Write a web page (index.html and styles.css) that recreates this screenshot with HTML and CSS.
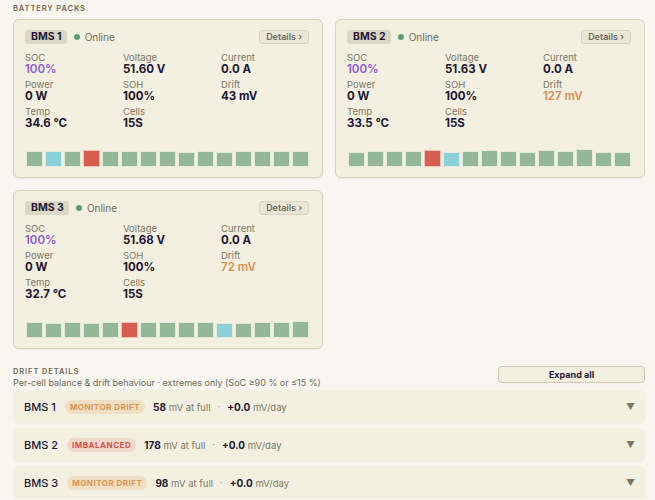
FILE: index.html
```html
<!DOCTYPE html>
<html lang="en">
<head>
  <meta charset="UTF-8" />
  <meta name="viewport" content="width=device-width, initial-scale=1.0" />
  <title>Battery Packs</title>
  <link rel="stylesheet" href="styles.css">
</head>
<body>
  <div class="page">
    <h2 class="section-title">BATTERY PACKS</h2>
    <div class="packs">

      <div class="pack">
        <div class="pack-head">
          <span class="pack-name">BMS 1</span>
          <span class="dot"></span>
          <span class="status">Online</span>
          <button class="details">Details ›</button>
        </div>
        <div class="stats">
          <div><div class="label">SOC</div><div class="value soc">100%</div></div>
          <div><div class="label">Voltage</div><div class="value">51.60 V</div></div>
          <div><div class="label">Current</div><div class="value">0.0 A</div></div>
          <div><div class="label">Power</div><div class="value">0 W</div></div>
          <div><div class="label">SOH</div><div class="value">100%</div></div>
          <div><div class="label">Drift</div><div class="value">43 mV</div></div>
          <div><div class="label">Temp</div><div class="value">34.6 °C</div></div>
          <div><div class="label">Cells</div><div class="value">15S</div></div>
        </div>
        <div class="cells">
          <span class="cell" style="height:16px"></span>
          <span class="cell low" style="height:16px"></span>
          <span class="cell" style="height:16px"></span>
          <span class="cell high" style="height:17px"></span>
          <span class="cell" style="height:16px"></span>
          <span class="cell" style="height:16px"></span>
          <span class="cell" style="height:16px"></span>
          <span class="cell" style="height:16px"></span>
          <span class="cell" style="height:15px"></span>
          <span class="cell" style="height:16px"></span>
          <span class="cell" style="height:15px"></span>
          <span class="cell" style="height:16px"></span>
          <span class="cell" style="height:16px"></span>
          <span class="cell" style="height:16px"></span>
          <span class="cell" style="height:16px"></span>
        </div>
      </div>

      <div class="pack">
        <div class="pack-head">
          <span class="pack-name">BMS 2</span>
          <span class="dot"></span>
          <span class="status">Online</span>
          <button class="details">Details ›</button>
        </div>
        <div class="stats">
          <div><div class="label">SOC</div><div class="value soc">100%</div></div>
          <div><div class="label">Voltage</div><div class="value">51.63 V</div></div>
          <div><div class="label">Current</div><div class="value">0.0 A</div></div>
          <div><div class="label">Power</div><div class="value">0 W</div></div>
          <div><div class="label">SOH</div><div class="value">100%</div></div>
          <div><div class="label">Drift</div><div class="value warn">127 mV</div></div>
          <div><div class="label">Temp</div><div class="value">33.5 °C</div></div>
          <div><div class="label">Cells</div><div class="value">15S</div></div>
        </div>
        <div class="cells">
          <span class="cell" style="height:15px"></span>
          <span class="cell" style="height:16px"></span>
          <span class="cell" style="height:16px"></span>
          <span class="cell" style="height:16px"></span>
          <span class="cell high" style="height:17px"></span>
          <span class="cell low" style="height:15px"></span>
          <span class="cell" style="height:16px"></span>
          <span class="cell" style="height:17px"></span>
          <span class="cell" style="height:16px"></span>
          <span class="cell" style="height:15px"></span>
          <span class="cell" style="height:17px"></span>
          <span class="cell" style="height:16px"></span>
          <span class="cell" style="height:18px"></span>
          <span class="cell" style="height:15px"></span>
          <span class="cell" style="height:15px"></span>
        </div>
      </div>

      <div class="pack">
        <div class="pack-head">
          <span class="pack-name">BMS 3</span>
          <span class="dot"></span>
          <span class="status">Online</span>
          <button class="details">Details ›</button>
        </div>
        <div class="stats">
          <div><div class="label">SOC</div><div class="value soc">100%</div></div>
          <div><div class="label">Voltage</div><div class="value">51.68 V</div></div>
          <div><div class="label">Current</div><div class="value">0.0 A</div></div>
          <div><div class="label">Power</div><div class="value">0 W</div></div>
          <div><div class="label">SOH</div><div class="value">100%</div></div>
          <div><div class="label">Drift</div><div class="value warn">72 mV</div></div>
          <div><div class="label">Temp</div><div class="value">32.7 °C</div></div>
          <div><div class="label">Cells</div><div class="value">15S</div></div>
        </div>
        <div class="cells">
          <span class="cell" style="height:16px"></span>
          <span class="cell" style="height:15px"></span>
          <span class="cell" style="height:16px"></span>
          <span class="cell" style="height:15px"></span>
          <span class="cell" style="height:16px"></span>
          <span class="cell high" style="height:16px"></span>
          <span class="cell" style="height:16px"></span>
          <span class="cell" style="height:16px"></span>
          <span class="cell" style="height:16px"></span>
          <span class="cell" style="height:16px"></span>
          <span class="cell low" style="height:15px"></span>
          <span class="cell" style="height:15px"></span>
          <span class="cell" style="height:16px"></span>
          <span class="cell" style="height:16px"></span>
          <span class="cell" style="height:17px"></span>
        </div>
      </div>

    </div>

    <div class="drift-head">
      <div>
        <h2 class="section-title">DRIFT DETAILS</h2>
        <p class="subtitle">Per-cell balance &amp; drift behaviour · extremes only (SoC ≥90 % or ≤15 %)</p>
      </div>
      <button class="expand">Expand all</button>
    </div>

    <div class="drift-list">
      <div class="drift-row">
        <span class="drift-name">BMS 1</span>
        <span class="tag monitor">MONITOR DRIFT</span>
        <span class="metric"><b>58</b> mV at full</span>
        <span class="sep">·</span>
        <span class="metric"><b>+0.0</b> mV/day</span>
        <span class="caret">▼</span>
      </div>
      <div class="drift-row">
        <span class="drift-name">BMS 2</span>
        <span class="tag imbalanced">IMBALANCED</span>
        <span class="metric"><b>178</b> mV at full</span>
        <span class="sep">·</span>
        <span class="metric"><b>+0.0</b> mV/day</span>
        <span class="caret">▼</span>
      </div>
      <div class="drift-row">
        <span class="drift-name">BMS 3</span>
        <span class="tag monitor">MONITOR DRIFT</span>
        <span class="metric"><b>98</b> mV at full</span>
        <span class="sep">·</span>
        <span class="metric"><b>+0.0</b> mV/day</span>
        <span class="caret">▼</span>
      </div>
    </div>
  </div>
</body>
</html>
```

FILE: styles.css
```css
body {
  margin: 0;
  font-family: Inter, "Noto Sans", sans-serif;
  background-color: #f9f6ef;
  color: #1f1733;
}
.page {
  padding: 3px 10px 0 13px;
}
.section-title {
  margin: 0;
  font-size: 7.5px;
  font-weight: 600;
  letter-spacing: 0.9px;
  color: #6e6756;
  line-height: 11px;
}
.packs {
  display: grid;
  grid-template-columns: 310px 310px;
  gap: 12px 12px;
  margin-top: 5px;
}
.pack {
  background: #f3f0e1;
  border: 1px solid #d8d2bf;
  border-radius: 6px;
  padding: 10px 13px 10px 11px;
  height: 137px;
  box-shadow: 0 1px 2px rgba(0, 0, 0, 0.06);
  display: flex;
  flex-direction: column;
}
.pack-head {
  display: flex;
  align-items: center;
  height: 14px;
}
.pack-name {
  background: #dcd6c4;
  border-radius: 3px;
  padding: 0 5px 0 6px;
  font-size: 10.5px;
  font-weight: 700;
  line-height: 14px;
}
.dot {
  width: 6px;
  height: 6px;
  border-radius: 50%;
  background: #5c9e73;
  margin-left: 7px;
}
.status {
  margin-left: 5px;
  font-size: 10px;
  color: #6e6a5d;
}
.details {
  margin-left: auto;
  font-family: inherit;
  font-size: 9px;
  font-weight: 600;
  color: #6e6a5d;
  background: #ebe7d7;
  border: 1px solid #d9d4c2;
  border-radius: 3px;
  height: 14px;
  padding: 0 6px;
  line-height: 12px;
}
.stats {
  display: grid;
  grid-template-columns: 98px 98px 1fr;
  row-gap: 3px;
  margin-top: 8px;
}
.label {
  font-size: 9.5px;
  color: #7b7566;
  line-height: 11px;
}
.value {
  font-size: 11.5px;
  font-weight: 700;
  line-height: 13px;
}
.soc {
  color: #8a5ad8;
  font-weight: 600;
}
.warn {
  color: #dc8d4e;
  font-weight: 600;
}
.cells {
  margin-top: auto;
  display: flex;
  align-items: flex-end;
  gap: 2px;
  padding-left: 1px;
}
.cell {
  flex: 1;
  background: #94b797;
  border: 1px solid #e6eadb;
  box-sizing: border-box;
  border-radius: 1px;
}
.cell.low {
  background: #8bcfd9;
}
.cell.high {
  background: #d65e4e;
  border-color: #f1c3b6;
}
.drift-head {
  display: flex;
  justify-content: space-between;
  align-items: flex-start;
  margin-top: 17px;
}
.subtitle {
  margin: 0;
  font-size: 9px;
  line-height: 12px;
  color: #6e6a5d;
}
.expand {
  margin-top: 0;
  width: 147px;
  height: 17px;
  font-family: inherit;
  font-size: 9px;
  font-weight: 700;
  color: #1f1733;
  background: #f3f0e1;
  border: 1px solid #cdc6b1;
  border-radius: 4px;
}
.drift-list {
  display: flex;
  flex-direction: column;
  gap: 5px;
  margin-top: 1px;
}
.drift-row {
  display: flex;
  align-items: center;
  height: 33px;
  background: #f3f0e1;
  border-radius: 6px;
  padding: 0 10px 0 11px;
  box-shadow: 0 1px 2px rgba(0, 0, 0, 0.05);
  font-size: 9.5px;
}
.drift-name {
  font-size: 11px;
  font-weight: 500;
  margin-right: 9px;
}
.tag {
  font-size: 8px;
  font-weight: 700;
  letter-spacing: 0.5px;
  border-radius: 7px;
  padding: 2px 5px;
  margin-right: 8px;
}
.tag.monitor {
  background: #efdfc5;
  color: #dc944f;
}
.tag.imbalanced {
  background: #f0d8ca;
  color: #d6544a;
}
.metric {
  color: #7b7566;
}
.metric b {
  color: #1f1733;
  font-size: 10px;
}
.sep {
  color: #9a9484;
  margin: 0 7px;
}
.caret {
  margin-left: auto;
  font-size: 9px;
  color: #7b7566;
}
```
